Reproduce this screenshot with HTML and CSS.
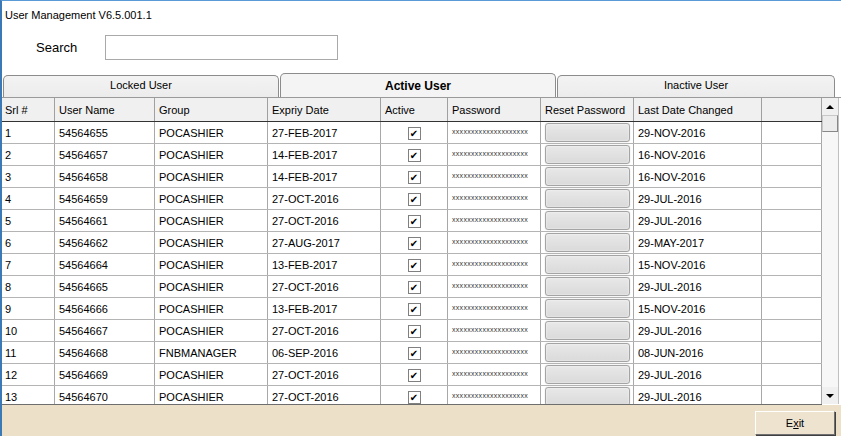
FILE: index.html
```html
<!DOCTYPE html>
<html>
<head>
<meta charset="utf-8">
<title>User Management</title>
<link rel="stylesheet" href="styles.css">
</head>
<body>
<div class="window">
  <div class="title">User Management V6.5.001.1</div>
  <div class="search-row">
    <span class="search-label">Search</span>
    <div class="search-box"></div>
  </div>
  <div class="tabs">
    <div class="tab tab-locked">Locked User</div>
    <div class="tab tab-active">Active User</div>
    <div class="tab tab-inactive">Inactive User</div>
  </div>
  <div class="frame">
    <div class="grid">
      <div class="row head">
        <div class="c c1">Srl #</div><div class="c">User Name</div><div class="c">Group</div><div class="c">Expriy Date</div><div class="c">Active</div><div class="c">Password</div><div class="c">Reset Password</div><div class="c">Last Date Changed</div><div class="c"></div>
      </div>
      <div class="row"><div class="c c1">1</div><div class="c">54564655</div><div class="c">POCASHIER</div><div class="c">27-FEB-2017</div><div class="c chk"><span class="box">&#10004;</span></div><div class="c pw">xxxxxxxxxxxxxxxxxxxx</div><div class="c rst"><span class="rbtn"></span></div><div class="c">29-NOV-2016</div><div class="c"></div></div>
      <div class="row"><div class="c c1">2</div><div class="c">54564657</div><div class="c">POCASHIER</div><div class="c">14-FEB-2017</div><div class="c chk"><span class="box">&#10004;</span></div><div class="c pw">xxxxxxxxxxxxxxxxxxxx</div><div class="c rst"><span class="rbtn"></span></div><div class="c">16-NOV-2016</div><div class="c"></div></div>
      <div class="row"><div class="c c1">3</div><div class="c">54564658</div><div class="c">POCASHIER</div><div class="c">14-FEB-2017</div><div class="c chk"><span class="box">&#10004;</span></div><div class="c pw">xxxxxxxxxxxxxxxxxxxx</div><div class="c rst"><span class="rbtn"></span></div><div class="c">16-NOV-2016</div><div class="c"></div></div>
      <div class="row"><div class="c c1">4</div><div class="c">54564659</div><div class="c">POCASHIER</div><div class="c">27-OCT-2016</div><div class="c chk"><span class="box">&#10004;</span></div><div class="c pw">xxxxxxxxxxxxxxxxxxxx</div><div class="c rst"><span class="rbtn"></span></div><div class="c">29-JUL-2016</div><div class="c"></div></div>
      <div class="row"><div class="c c1">5</div><div class="c">54564661</div><div class="c">POCASHIER</div><div class="c">27-OCT-2016</div><div class="c chk"><span class="box">&#10004;</span></div><div class="c pw">xxxxxxxxxxxxxxxxxxxx</div><div class="c rst"><span class="rbtn"></span></div><div class="c">29-JUL-2016</div><div class="c"></div></div>
      <div class="row"><div class="c c1">6</div><div class="c">54564662</div><div class="c">POCASHIER</div><div class="c">27-AUG-2017</div><div class="c chk"><span class="box">&#10004;</span></div><div class="c pw">xxxxxxxxxxxxxxxxxxxx</div><div class="c rst"><span class="rbtn"></span></div><div class="c">29-MAY-2017</div><div class="c"></div></div>
      <div class="row"><div class="c c1">7</div><div class="c">54564664</div><div class="c">POCASHIER</div><div class="c">13-FEB-2017</div><div class="c chk"><span class="box">&#10004;</span></div><div class="c pw">xxxxxxxxxxxxxxxxxxxx</div><div class="c rst"><span class="rbtn"></span></div><div class="c">15-NOV-2016</div><div class="c"></div></div>
      <div class="row"><div class="c c1">8</div><div class="c">54564665</div><div class="c">POCASHIER</div><div class="c">27-OCT-2016</div><div class="c chk"><span class="box">&#10004;</span></div><div class="c pw">xxxxxxxxxxxxxxxxxxxx</div><div class="c rst"><span class="rbtn"></span></div><div class="c">29-JUL-2016</div><div class="c"></div></div>
      <div class="row"><div class="c c1">9</div><div class="c">54564666</div><div class="c">POCASHIER</div><div class="c">13-FEB-2017</div><div class="c chk"><span class="box">&#10004;</span></div><div class="c pw">xxxxxxxxxxxxxxxxxxxx</div><div class="c rst"><span class="rbtn"></span></div><div class="c">15-NOV-2016</div><div class="c"></div></div>
      <div class="row"><div class="c c1">10</div><div class="c">54564667</div><div class="c">POCASHIER</div><div class="c">27-OCT-2016</div><div class="c chk"><span class="box">&#10004;</span></div><div class="c pw">xxxxxxxxxxxxxxxxxxxx</div><div class="c rst"><span class="rbtn"></span></div><div class="c">29-JUL-2016</div><div class="c"></div></div>
      <div class="row"><div class="c c1">11</div><div class="c">54564668</div><div class="c">FNBMANAGER</div><div class="c">06-SEP-2016</div><div class="c chk"><span class="box">&#10004;</span></div><div class="c pw">xxxxxxxxxxxxxxxxxxxx</div><div class="c rst"><span class="rbtn"></span></div><div class="c">08-JUN-2016</div><div class="c"></div></div>
      <div class="row"><div class="c c1">12</div><div class="c">54564669</div><div class="c">POCASHIER</div><div class="c">27-OCT-2016</div><div class="c chk"><span class="box">&#10004;</span></div><div class="c pw">xxxxxxxxxxxxxxxxxxxx</div><div class="c rst"><span class="rbtn"></span></div><div class="c">29-JUL-2016</div><div class="c"></div></div>
      <div class="row"><div class="c c1">13</div><div class="c">54564670</div><div class="c">POCASHIER</div><div class="c">27-OCT-2016</div><div class="c chk"><span class="box">&#10004;</span></div><div class="c pw">xxxxxxxxxxxxxxxxxxxx</div><div class="c rst"><span class="rbtn"></span></div><div class="c">29-JUL-2016</div><div class="c"></div></div>
    </div>
    <div class="scrollbar">
      <div class="sb-btn"><span class="tri-up"></span></div>
      <div class="sb-thumb"></div>
      <div class="sb-track"></div>
      <div class="sb-btn"><span class="tri-down"></span></div>
    </div>
  </div>
  <div class="footer">
    <div class="exit-btn">E<u>x</u>it</div>
  </div>
</div>
</body>
</html>
```

FILE: styles.css
```css
html, body {
  margin: 0;
  padding: 0;
  background: #ffffff;
}
body {
  font-family: "Liberation Sans", Arial, sans-serif;
  font-size: 11px;
  color: #000;
}
.window {
  width: 841px;
  height: 436px;
  box-sizing: border-box;
  border-top: 1px solid #5b9bd5;
  border-left: 2px solid #3a78b6;
  display: flex;
  flex-direction: column;
  overflow: hidden;
  background: #fff;
}
.title {
  height: 27px;
  box-sizing: border-box;
  padding: 7px 0 0 3px;
  line-height: 14px;
  font-size: 11px;
  flex-shrink: 0;
}
.search-row {
  height: 45px;
  box-sizing: border-box;
  padding-top: 7px;
  display: flex;
  align-items: flex-start;
  flex-shrink: 0;
}
.search-label {
  font-size: 13px;
  line-height: 25px;
  margin-left: 34px;
  width: 69px;
}
.search-box {
  width: 233px;
  height: 25px;
  box-sizing: border-box;
  border: 1px solid #a9a9a9;
  background: #fff;
}
.tabs {
  height: 25px;
  box-sizing: border-box;
  border-bottom: 1px solid #9a9a9a;
  display: flex;
  align-items: flex-end;
  gap: 1px;
  padding-left: 1px;
  flex-shrink: 0;
}
.tab {
  box-sizing: border-box;
  height: 22px;
  border: 1px solid #8c8c8c;
  border-bottom: none;
  border-radius: 5px 5px 0 0;
  background: linear-gradient(#f3f3f3, #ececec);
  text-align: center;
  font-size: 11px;
  line-height: 19px;
}
.tab-locked { width: 276px; }
.tab-active {
  width: 276px;
  height: 24px;
  font-weight: bold;
  font-size: 12px;
  line-height: 24px;
  background: #f4f4f4;
}
.tab-inactive { width: 278px; }
.frame {
  height: 307px;
  display: flex;
  flex-shrink: 0;
  width: 839px;
}
.grid {
  width: 820px;
  height: 307px;
  overflow: hidden;
  box-sizing: border-box;
  border-bottom: 1px solid #6e6e6e;
}
.row {
  display: grid;
  grid-template-columns: 53px 100px 113px 113px 67px 93px 93px 128px 60px;
  height: 22px;
  box-sizing: border-box;
  border-bottom: 1px solid #b4b4b4;
}
.row.head {
  height: 24px;
  background: #f0f0f0;
  border-bottom: 1px solid #333;
}
.c {
  box-sizing: border-box;
  border-right: 1px solid #a8a8a8;
  padding-left: 4px;
  padding-top: 1px;
  line-height: 21px;
  white-space: nowrap;
  overflow: hidden;
  font-size: 11px;
}
.head .c {
  line-height: 23px;
  border-right-color: #a0a0a0;
}
.c1 { padding-left: 3px; }
.chk {
  display: flex;
  align-items: center;
  justify-content: center;
  padding-left: 0;
}
.box {
  width: 13px;
  height: 13px;
  box-sizing: border-box;
  border: 1px solid #808080;
  background: #fff;
  font-size: 10px;
  line-height: 11px;
  text-align: center;
  color: #000;
  font-family: "DejaVu Sans", sans-serif;
}
.pw {
  font-size: 7px;
  line-height: 18px;
  color: #333;
  letter-spacing: 0.3px;
}
.rst {
  padding: 1px 0 0 4px;
}
.rbtn {
  display: block;
  width: 85px;
  height: 19px;
  box-sizing: border-box;
  border: 1px solid #a4a4a4;
  border-radius: 3px;
  background: linear-gradient(#e8e8e8, #dadada);
  box-shadow: inset 0 0 2px #fafafa, 0 0 1px #bbb;
}
.scrollbar {
  width: 16px;
  height: 306px;
  display: flex;
  flex-direction: column;
  background: #f4f4f4;
  border-right: 1px solid #c0c0c0;
}
.sb-btn {
  height: 17px;
  display: flex;
  align-items: center;
  justify-content: center;
  background: #f0f0f0;
  flex-shrink: 0;
}
.tri-up {
  width: 0;
  height: 0;
  border-left: 4px solid transparent;
  border-right: 4px solid transparent;
  border-bottom: 4px solid #000;
}
.tri-down {
  width: 0;
  height: 0;
  border-left: 4px solid transparent;
  border-right: 4px solid transparent;
  border-top: 4px solid #000;
}
.sb-thumb {
  height: 17px;
  box-sizing: border-box;
  border: 1px solid #c8c8c8;
  border-right-color: #888;
  border-bottom-color: #888;
  background: #ececec;
  flex-shrink: 0;
}
.sb-track {
  flex: 1;
  background: #f7f7f7;
}
.footer {
  flex: 1;
  background: #ece0c8;
  display: flex;
  justify-content: flex-end;
  align-items: flex-start;
  padding-top: 6px;
  padding-right: 6px;
}
.exit-btn {
  width: 80px;
  height: 24px;
  box-sizing: border-box;
  border: 1px solid #fff;
  border-right-color: #6f6f6f;
  border-bottom-color: #6f6f6f;
  box-shadow: 1px 1px 0 #404040;
  background: #ede3cf;
  text-align: center;
  line-height: 22px;
  font-size: 11px;
}
```
